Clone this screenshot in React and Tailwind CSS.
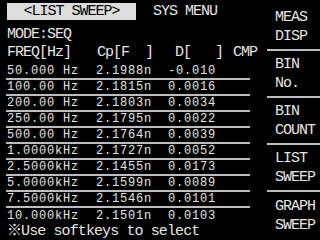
const rows = [
  ["50.000 Hz", "2.1988n", "-0.010"],
  ["100.00 Hz", "2.1815n", "0.0016"],
  ["200.00 Hz", "2.1803n", "0.0034"],
  ["250.00 Hz", "2.1795n", "0.0022"],
  ["500.00 Hz", "2.1764n", "0.0039"],
  ["1.0000kHz", "2.1727n", "0.0052"],
  ["2.5000kHz", "2.1455n", "0.0173"],
  ["5.0000kHz", "2.1599n", "0.0089"],
  ["7.5000kHz", "2.1546n", "0.0101"],
  ["10.000kHz", "2.1501n", "0.0103"],
];

const menu = [
  ["MEAS", "DISP"],
  ["BIN", "No."],
  ["BIN", "COUNT"],
  ["LIST", "SWEEP"],
  ["GRAPH", "SWEEP"],
];

const mono = { fontFamily: '"Liberation Mono", "Noto Sans CJK SC", monospace' };

export default function App() {
  return (
    <div
      className="w-[320px] h-[240px] bg-black text-[#e6e6e6] flex overflow-hidden"
      style={mono}
    >
      {/* left area */}
      <div className="w-[260px] flex flex-col">
        <div className="h-[24px] flex items-start pt-[3px] pl-[7px]">
          <div className="w-[129px] h-[17px] bg-[#dcdcdc] text-black flex items-center justify-center text-[15px] tracking-[-1px] leading-none whitespace-pre">
            {"<LIST SWEEP>"}
          </div>
          <div className="ml-[17px] mt-[1px] text-[15px] tracking-[-1px] leading-[16px] whitespace-pre">
            SYS MENU
          </div>
        </div>
        <div className="mt-[5px] pl-[7px] h-[16px] text-[15px] tracking-[-1px] leading-[16px]">
          MODE:SEQ
        </div>
        <div className="mt-[2px] h-[16px] flex text-[15px] tracking-[-1px] leading-[16px] whitespace-pre">
          <span className="pl-[7px] w-[97px]">FREQ[Hz]</span>
          <span className="w-[78px]">{"Cp[F  ]"}</span>
          <span className="w-[58px]">{"D[   ]"}</span>
          <span>CMP</span>
        </div>
        <div className="mt-[3px] ml-[6px] w-[244px] flex flex-col">
          {rows.map((r, i) => (
            <div
              key={i}
              className={
                "h-[16px] flex items-center text-[12px] tracking-[0.8px] whitespace-pre leading-none " +
                (i < rows.length - 1 ? "border-b-2 border-[#bdbdbd]" : "")
              }
            >
              <span className="pl-[1px] w-[90px]">{r[0]}</span>
              <span className="w-[72px]">{r[1]}</span>
              <span>{r[2]}</span>
            </div>
          ))}
        </div>
        <div className="pl-[7px] h-[16px] text-[15px] tracking-[-0.9px] leading-[16px] whitespace-pre">
          ※Use softkeys to select
        </div>
      </div>

      {/* soft key menu */}
      <div className="flex-1 flex flex-col pl-[7px] pt-[4px]">
        {menu.map((m, i) => (
          <div
            key={i}
            className={
              "h-[47px] flex flex-col justify-center pl-[8px] text-[15px] tracking-[-1px] leading-[19px] " +
              (i < menu.length - 1 ? "border-b-2 border-[#bdbdbd]" : "")
            }
          >
            <span>{m[0]}</span>
            <span>{m[1]}</span>
          </div>
        ))}
      </div>
    </div>
  );
}
